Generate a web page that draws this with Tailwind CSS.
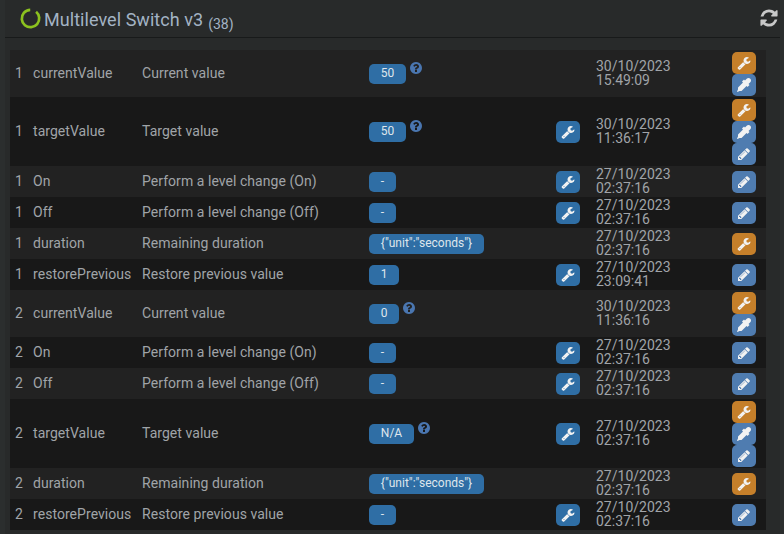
<!DOCTYPE html>
<html><head><meta charset="utf-8">
<script src="https://cdn.jsdelivr.net/npm/@tailwindcss/browser@4"></script>
</head>
<body class="bg-[#2b2e2e] w-[784px] h-[534px] overflow-hidden font-['Roboto',sans-serif] text-[14px] leading-[15px] tracking-[0.05px] text-[#a0a4a8]">
<svg class="hidden" width="0" height="0">
<symbol id="wr" viewBox="0 0 1792 1792"><path fill="currentColor" d="M448 1472q0-26-19-45t-45-19-45 19-19 45 19 45 45 19 45-19 19-45zm644-420l-682 682q-37 37-90 37-52 0-91-37l-106-108q-38-36-38-90 0-53 38-91l681-681q39 98 114.5 173.5t173.5 114.5zm634-435q0 39-23 106-47 134-164.5 217.5t-258.5 83.5q-185 0-316.5-131.5t-131.5-316.5 131.5-316.5 316.5-131.5q58 0 121.5 16.5t107.5 46.5q16 11 16 28t-16 28l-293 169v224l193 107q5-3 79-48.5t135.5-81 70.5-35.5q15 0 23.5 10t8.5 25z"/></symbol>
<symbol id="pe" viewBox="0 0 1792 1792"><path fill="currentColor" d="M491 1536l91-91-235-235-91 91v107h128v128h107zm523-928q0-22-22-22-10 0-17 7l-542 542q-7 7-7 17 0 22 22 22 10 0 17-7l542-542q7-7 7-17zm-54-192l416 416-832 832h-416v-416zm683 96q0 53-37 90l-166 166-416-416 166-165q36-38 90-38 53 0 91 38l235 234q37 39 37 91z"/></symbol>
<symbol id="ey" viewBox="0 0 1792 1792"><path fill="currentColor" d="M1698 94q94 94 94 226.5t-94 225.5l-225 223 104 104q10 10 10 23t-10 23l-210 210q-10 10-23 10t-23-10l-105-105-603 603q-37 37-90 37h-203l-256 128-64-64 128-256v-203q0-53 37-90l603-603-105-105q-10-10-10-23t10-23l210-210q10-10 23-10t23 10l104 104 223-225q93-94 225.5-94t226.5 94z"/></symbol>
<symbol id="qu" viewBox="128 128 1536 1536"><path fill="currentColor" d="M1024 1376v-192q0-14-9-23t-23-9h-192q-14 0-23 9t-9 23v192q0 14 9 23t23 9h192q14 0 23-9t9-23zm256-672q0-88-55.5-163t-138.5-116-170-41q-243 0-371 213-15 24 8 42l132 100q7 6 19 6 16 0 25-12 53-68 86-92 34-24 86-24 48 0 85.5 26t37.5 59q0 38-20 61t-68 45q-63 28-115.5 86.5t-52.5 125.5v36q0 14 9 23t23 9h192q14 0 23-9t9-23q0-19 21.5-49.5t54.5-49.5q32-18 49-28.5t46-35 44.5-48 28-60.5 12.5-81zm384 192q0 209-103 385.5t-279.5 279.5-385.5 103-385.5-103-279.5-279.5-103-385.5 103-385.5 279.5-279.5 385.5-103 385.5 103 279.5 279.5 103 385.5z"/></symbol>
</svg>
<div class="ml-[5px] mr-[4px] h-[534px] bg-[#282a2a]">
  <header class="h-[38px] border-b border-[#181a1a] flex items-start pl-[15px] pr-[1px]">
    <svg class="w-[21px] h-[21px] mt-[8px] shrink-0" viewBox="0 0 21 21"><circle cx="10.5" cy="10.5" r="8.7" fill="none" stroke="#8cc21f" stroke-width="2.7" stroke-dasharray="48 6.7" transform="rotate(-50 10.5 10.5)"/></svg>
    <h1 class="ml-[3px] mt-[9px] text-[18px] leading-[21px] font-normal text-[#a3b3c4]">Multilevel Switch v3</h1>
    <span class="ml-[5px] mt-[16px] text-[14px] leading-[16px] tracking-normal text-[#a3b3c4]">(38)</span>
    <svg class="ml-auto mt-[8px] w-[20px] h-[20px] text-[#c8c8c8]" viewBox="0 0 1792 1792"><path fill="currentColor" d="M1639 1056q0 5-1 7-64 268-268 434.5t-478 166.5q-146 0-282.5-55t-243.5-157l-129 129q-19 19-45 19t-45-19-19-45v-448q0-26 19-45t45-19h448q26 0 45 19t19 45-19 45l-137 137q71 66 161 102t187 36q134 0 250-65t186-179q11-17 53-117 8-23 30-23h192q13 0 22.5 9.5t9.5 22.5zm25-800v448q0 26-19 45t-45 19h-448q-26 0-45-19t-19-45 19-45l138-138q-148-137-349-137-134 0-250 65t-186 179q-11 17-53 117-8 23-30 23h-199q-13 0-22.5-9.5t-9.5-22.5v-7q65-268 270-434.5t480-166.5q146 0 284 55.5t245 156.5l130-129q19-19 45-19t45 19 19 45z"/></svg>
  </header>
  <div class="mt-[12px] ml-[5px] w-[756px]">

    <div class="flex items-center h-[47px] bg-[#222222]">
      <div class="w-[23px] pl-[5px]">1</div><div class="w-[109px]">currentValue</div><div class="w-[227px]">Current value</div>
      <div class="w-[187px] flex items-start"><span class="h-[20px] w-[37px] rounded-[5px] bg-[#2f6ea5] text-[#dfe6ec] text-[12px] leading-[19px] tracking-normal text-center mt-[1px]">50</span><svg class="w-[12px] h-[12px] ml-[4px] -mt-[1px] text-[#4a76b0]"><use href="#qu"/></svg></div>
      <div class="w-[40px]"></div><div class="w-[136px] leading-[14px] tracking-normal mb-[2px]">30/10/2023<br>15:49:09</div>
      <div class="flex flex-col"><span class="h-[22px] w-[24px] rounded-[5px] bg-[#c57f2a] text-[#f2f2f2] flex items-center justify-center"><svg class="w-[14px] h-[14px]"><use href="#wr"/></svg></span><span class="h-[22px] w-[24px] rounded-[5px] bg-[#4f7cb0] text-[#f2f2f2] flex items-center justify-center"><svg class="w-[14px] h-[14px]"><use href="#ey"/></svg></span></div>
    </div>

    <div class="flex items-center h-[69px] bg-[#181818]">
      <div class="w-[23px] pl-[5px]">1</div><div class="w-[109px]">targetValue</div><div class="w-[227px]">Target value</div>
      <div class="w-[187px] flex items-start"><span class="h-[20px] w-[37px] rounded-[5px] bg-[#2f6ea5] text-[#dfe6ec] text-[12px] leading-[19px] tracking-normal text-center mt-[1px]">50</span><svg class="w-[12px] h-[12px] ml-[4px] -mt-[1px] text-[#4a76b0]"><use href="#qu"/></svg></div>
      <div class="w-[40px]"><span class="h-[22px] w-[24px] rounded-[5px] bg-[#2f6ea5] text-[#f2f2f2] flex items-center justify-center"><svg class="w-[14px] h-[14px]"><use href="#wr"/></svg></span></div><div class="w-[136px] leading-[14px] tracking-normal mb-[2px]">30/10/2023<br>11:36:17</div>
      <div class="flex flex-col"><span class="h-[22px] w-[24px] rounded-[5px] bg-[#c57f2a] text-[#f2f2f2] flex items-center justify-center"><svg class="w-[14px] h-[14px]"><use href="#wr"/></svg></span><span class="h-[22px] w-[24px] rounded-[5px] bg-[#4f7cb0] text-[#f2f2f2] flex items-center justify-center"><svg class="w-[14px] h-[14px]"><use href="#ey"/></svg></span><span class="h-[22px] w-[24px] rounded-[5px] bg-[#4f7cb0] text-[#f2f2f2] flex items-center justify-center"><svg class="w-[14px] h-[14px]"><use href="#pe"/></svg></span></div>
    </div>

    <div class="flex items-center h-[31px] bg-[#222222]">
      <div class="w-[23px] pl-[5px]">1</div><div class="w-[109px]">On</div><div class="w-[227px]">Perform a level change (On)</div>
      <div class="w-[187px]"><span class="block h-[20px] w-[27px] rounded-[5px] bg-[#2f6ea5] text-[#dfe6ec] text-[12px] leading-[19px] tracking-normal text-center">-</span></div>
      <div class="w-[40px]"><span class="h-[22px] w-[24px] rounded-[5px] bg-[#2f6ea5] text-[#f2f2f2] flex items-center justify-center"><svg class="w-[14px] h-[14px]"><use href="#wr"/></svg></span></div><div class="w-[136px] leading-[14px] tracking-normal mb-[2px]">27/10/2023<br>02:37:16</div>
      <div class="flex flex-col"><span class="h-[22px] w-[24px] rounded-[5px] bg-[#4f7cb0] text-[#f2f2f2] flex items-center justify-center"><svg class="w-[14px] h-[14px]"><use href="#pe"/></svg></span></div>
    </div>

    <div class="flex items-center h-[31px] bg-[#181818]">
      <div class="w-[23px] pl-[5px]">1</div><div class="w-[109px]">Off</div><div class="w-[227px]">Perform a level change (Off)</div>
      <div class="w-[187px]"><span class="block h-[20px] w-[27px] rounded-[5px] bg-[#2f6ea5] text-[#dfe6ec] text-[12px] leading-[19px] tracking-normal text-center">-</span></div>
      <div class="w-[40px]"><span class="h-[22px] w-[24px] rounded-[5px] bg-[#2f6ea5] text-[#f2f2f2] flex items-center justify-center"><svg class="w-[14px] h-[14px]"><use href="#wr"/></svg></span></div><div class="w-[136px] leading-[14px] tracking-normal mb-[2px]">27/10/2023<br>02:37:16</div>
      <div class="flex flex-col"><span class="h-[22px] w-[24px] rounded-[5px] bg-[#4f7cb0] text-[#f2f2f2] flex items-center justify-center"><svg class="w-[14px] h-[14px]"><use href="#pe"/></svg></span></div>
    </div>

    <div class="flex items-center h-[31px] bg-[#222222]">
      <div class="w-[23px] pl-[5px]">1</div><div class="w-[109px]">duration</div><div class="w-[227px]">Remaining duration</div>
      <div class="w-[187px]"><span class="block h-[20px] w-[115px] rounded-[5px] bg-[#2f6ea5] text-[#dfe6ec] text-[12px] leading-[19px] tracking-normal text-center">{"unit":"seconds"}</span></div>
      <div class="w-[40px]"></div><div class="w-[136px] leading-[14px] tracking-normal mb-[2px]">27/10/2023<br>02:37:16</div>
      <div class="flex flex-col"><span class="h-[22px] w-[24px] rounded-[5px] bg-[#c57f2a] text-[#f2f2f2] flex items-center justify-center"><svg class="w-[14px] h-[14px]"><use href="#wr"/></svg></span></div>
    </div>

    <div class="flex items-center h-[31px] bg-[#181818]">
      <div class="w-[23px] pl-[5px]">1</div><div class="w-[109px]">restorePrevious</div><div class="w-[227px]">Restore previous value</div>
      <div class="w-[187px]"><span class="block h-[20px] w-[30px] rounded-[5px] bg-[#2f6ea5] text-[#dfe6ec] text-[12px] leading-[19px] tracking-normal text-center">1</span></div>
      <div class="w-[40px]"><span class="h-[22px] w-[24px] rounded-[5px] bg-[#2f6ea5] text-[#f2f2f2] flex items-center justify-center"><svg class="w-[14px] h-[14px]"><use href="#wr"/></svg></span></div><div class="w-[136px] leading-[14px] tracking-normal mb-[2px]">27/10/2023<br>23:09:41</div>
      <div class="flex flex-col"><span class="h-[22px] w-[24px] rounded-[5px] bg-[#4f7cb0] text-[#f2f2f2] flex items-center justify-center"><svg class="w-[14px] h-[14px]"><use href="#pe"/></svg></span></div>
    </div>

    <div class="flex items-center h-[47px] bg-[#222222]">
      <div class="w-[23px] pl-[5px]">2</div><div class="w-[109px]">currentValue</div><div class="w-[227px]">Current value</div>
      <div class="w-[187px] flex items-start"><span class="h-[20px] w-[30px] rounded-[5px] bg-[#2f6ea5] text-[#dfe6ec] text-[12px] leading-[19px] tracking-normal text-center mt-[1px]">0</span><svg class="w-[12px] h-[12px] ml-[4px] -mt-[1px] text-[#4a76b0]"><use href="#qu"/></svg></div>
      <div class="w-[40px]"></div><div class="w-[136px] leading-[14px] tracking-normal mb-[2px]">30/10/2023<br>11:36:16</div>
      <div class="flex flex-col"><span class="h-[22px] w-[24px] rounded-[5px] bg-[#c57f2a] text-[#f2f2f2] flex items-center justify-center"><svg class="w-[14px] h-[14px]"><use href="#wr"/></svg></span><span class="h-[22px] w-[24px] rounded-[5px] bg-[#4f7cb0] text-[#f2f2f2] flex items-center justify-center"><svg class="w-[14px] h-[14px]"><use href="#ey"/></svg></span></div>
    </div>

    <div class="flex items-center h-[31px] bg-[#181818]">
      <div class="w-[23px] pl-[5px]">2</div><div class="w-[109px]">On</div><div class="w-[227px]">Perform a level change (On)</div>
      <div class="w-[187px]"><span class="block h-[20px] w-[27px] rounded-[5px] bg-[#2f6ea5] text-[#dfe6ec] text-[12px] leading-[19px] tracking-normal text-center">-</span></div>
      <div class="w-[40px]"><span class="h-[22px] w-[24px] rounded-[5px] bg-[#2f6ea5] text-[#f2f2f2] flex items-center justify-center"><svg class="w-[14px] h-[14px]"><use href="#wr"/></svg></span></div><div class="w-[136px] leading-[14px] tracking-normal mb-[2px]">27/10/2023<br>02:37:16</div>
      <div class="flex flex-col"><span class="h-[22px] w-[24px] rounded-[5px] bg-[#4f7cb0] text-[#f2f2f2] flex items-center justify-center"><svg class="w-[14px] h-[14px]"><use href="#pe"/></svg></span></div>
    </div>

    <div class="flex items-center h-[31px] bg-[#222222]">
      <div class="w-[23px] pl-[5px]">2</div><div class="w-[109px]">Off</div><div class="w-[227px]">Perform a level change (Off)</div>
      <div class="w-[187px]"><span class="block h-[20px] w-[27px] rounded-[5px] bg-[#2f6ea5] text-[#dfe6ec] text-[12px] leading-[19px] tracking-normal text-center">-</span></div>
      <div class="w-[40px]"><span class="h-[22px] w-[24px] rounded-[5px] bg-[#2f6ea5] text-[#f2f2f2] flex items-center justify-center"><svg class="w-[14px] h-[14px]"><use href="#wr"/></svg></span></div><div class="w-[136px] leading-[14px] tracking-normal mb-[2px]">27/10/2023<br>02:37:16</div>
      <div class="flex flex-col"><span class="h-[22px] w-[24px] rounded-[5px] bg-[#4f7cb0] text-[#f2f2f2] flex items-center justify-center"><svg class="w-[14px] h-[14px]"><use href="#pe"/></svg></span></div>
    </div>

    <div class="flex items-center h-[69px] bg-[#181818]">
      <div class="w-[23px] pl-[5px]">2</div><div class="w-[109px]">targetValue</div><div class="w-[227px]">Target value</div>
      <div class="w-[187px] flex items-start"><span class="h-[20px] w-[45px] rounded-[5px] bg-[#2f6ea5] text-[#dfe6ec] text-[12px] leading-[19px] tracking-normal text-center mt-[1px]">N/A</span><svg class="w-[12px] h-[12px] ml-[4px] -mt-[1px] text-[#4a76b0]"><use href="#qu"/></svg></div>
      <div class="w-[40px]"><span class="h-[22px] w-[24px] rounded-[5px] bg-[#2f6ea5] text-[#f2f2f2] flex items-center justify-center"><svg class="w-[14px] h-[14px]"><use href="#wr"/></svg></span></div><div class="w-[136px] leading-[14px] tracking-normal mb-[2px]">27/10/2023<br>02:37:16</div>
      <div class="flex flex-col"><span class="h-[22px] w-[24px] rounded-[5px] bg-[#c57f2a] text-[#f2f2f2] flex items-center justify-center"><svg class="w-[14px] h-[14px]"><use href="#wr"/></svg></span><span class="h-[22px] w-[24px] rounded-[5px] bg-[#4f7cb0] text-[#f2f2f2] flex items-center justify-center"><svg class="w-[14px] h-[14px]"><use href="#ey"/></svg></span><span class="h-[22px] w-[24px] rounded-[5px] bg-[#4f7cb0] text-[#f2f2f2] flex items-center justify-center"><svg class="w-[14px] h-[14px]"><use href="#pe"/></svg></span></div>
    </div>

    <div class="flex items-center h-[31px] bg-[#222222]">
      <div class="w-[23px] pl-[5px]">2</div><div class="w-[109px]">duration</div><div class="w-[227px]">Remaining duration</div>
      <div class="w-[187px]"><span class="block h-[20px] w-[115px] rounded-[5px] bg-[#2f6ea5] text-[#dfe6ec] text-[12px] leading-[19px] tracking-normal text-center">{"unit":"seconds"}</span></div>
      <div class="w-[40px]"></div><div class="w-[136px] leading-[14px] tracking-normal mb-[2px]">27/10/2023<br>02:37:16</div>
      <div class="flex flex-col"><span class="h-[22px] w-[24px] rounded-[5px] bg-[#c57f2a] text-[#f2f2f2] flex items-center justify-center"><svg class="w-[14px] h-[14px]"><use href="#wr"/></svg></span></div>
    </div>

    <div class="flex items-center h-[31px] bg-[#181818]">
      <div class="w-[23px] pl-[5px]">2</div><div class="w-[109px]">restorePrevious</div><div class="w-[227px]">Restore previous value</div>
      <div class="w-[187px]"><span class="block h-[20px] w-[27px] rounded-[5px] bg-[#2f6ea5] text-[#dfe6ec] text-[12px] leading-[19px] tracking-normal text-center">-</span></div>
      <div class="w-[40px]"><span class="h-[22px] w-[24px] rounded-[5px] bg-[#2f6ea5] text-[#f2f2f2] flex items-center justify-center"><svg class="w-[14px] h-[14px]"><use href="#wr"/></svg></span></div><div class="w-[136px] leading-[14px] tracking-normal mb-[2px]">27/10/2023<br>02:37:16</div>
      <div class="flex flex-col"><span class="h-[22px] w-[24px] rounded-[5px] bg-[#4f7cb0] text-[#f2f2f2] flex items-center justify-center"><svg class="w-[14px] h-[14px]"><use href="#pe"/></svg></span></div>
    </div>

  </div>
</div>
</body></html>
